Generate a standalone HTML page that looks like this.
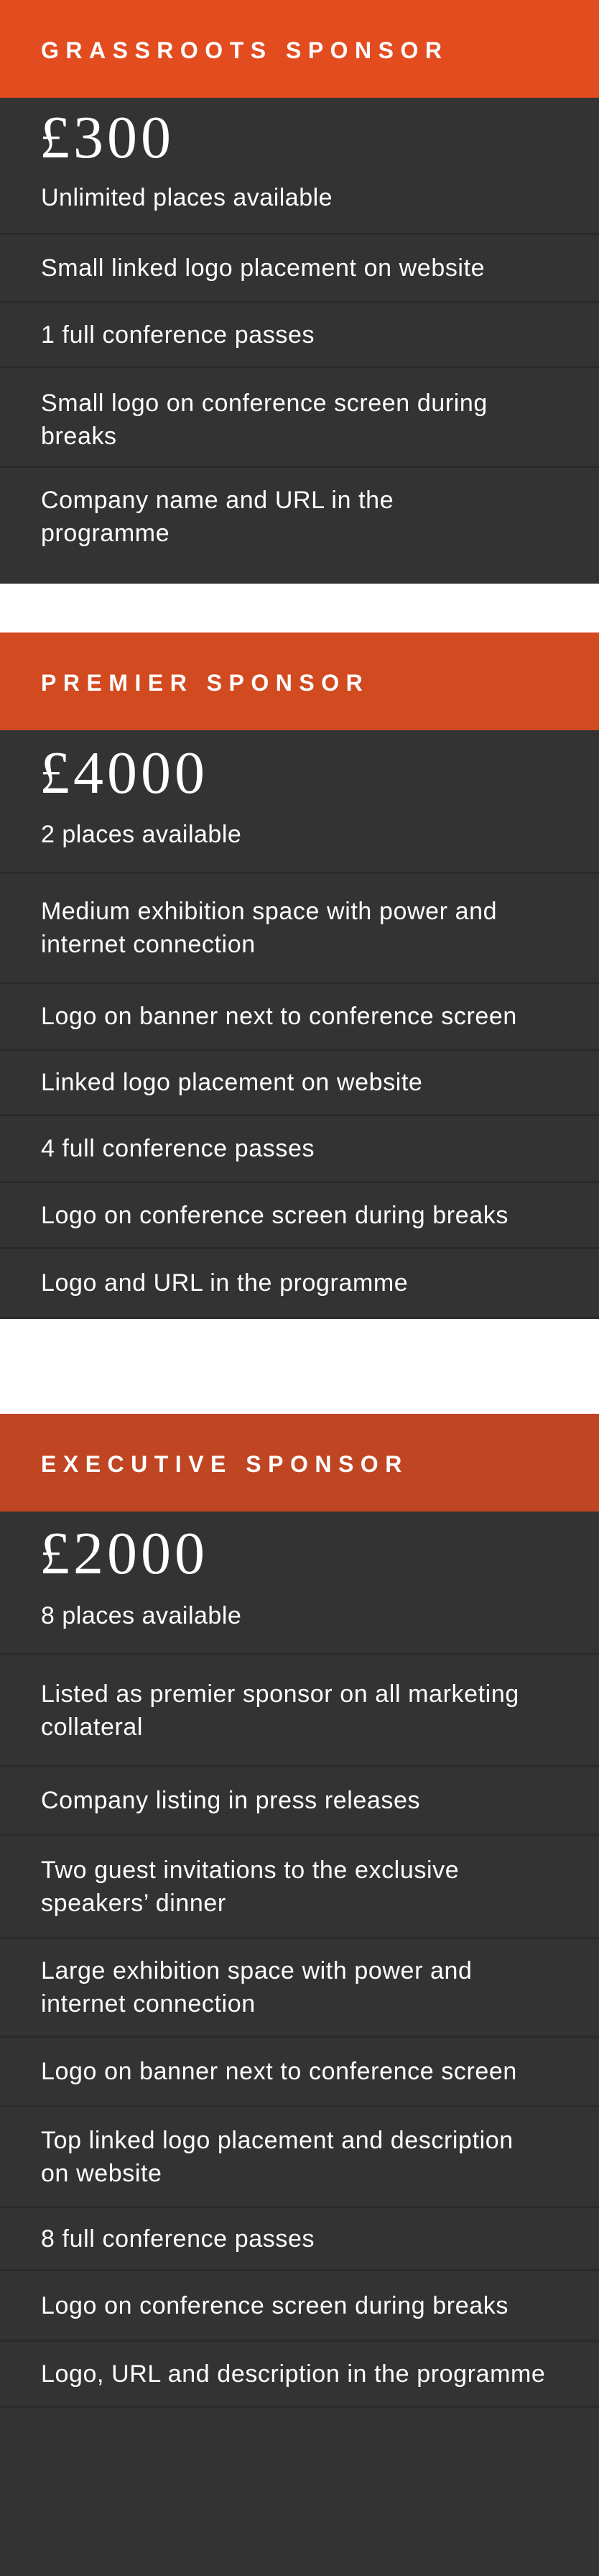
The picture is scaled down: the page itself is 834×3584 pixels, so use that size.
<!DOCTYPE html>
<html><head><meta charset="utf-8"><style>
*{margin:0;padding:0;box-sizing:border-box}
body{width:834px;height:3584px;background:#fff;font-family:"Liberation Sans",sans-serif;color:#fff;position:relative;overflow:hidden}
.sec{position:absolute;left:0;width:834px;background:#333}
.hd{height:136px;display:flex;align-items:center;padding-left:57px;font-weight:bold;font-size:32px;letter-spacing:9.5px;padding-top:4px;white-space:nowrap}
.pr{position:relative}
.price{position:absolute;left:55px;font-family:"Liberation Serif",serif;font-size:84px;line-height:84px;letter-spacing:5px}
.sub{position:absolute;left:57px;font-size:34px;line-height:40px;letter-spacing:0.5px}
.row{display:flex;align-items:center;padding-left:57px;font-size:34px;line-height:46px;border-top:3px solid #2a2a2a;letter-spacing:0.6px;white-space:nowrap}
</style></head><body>

<div class="sec" style="top:0;height:812px">
<div class="hd" style="background:#e34c1f">GRASSROOTS SPONSOR</div>
<div class="pr" style="height:188px"><div class="price" style="top:14px">£300</div><div class="sub" style="top:119px">Unlimited places available</div></div>
<div class="row" style="height:95px">Small linked logo placement on website</div>
<div class="row" style="height:90px">1 full conference passes</div>
<div class="row" style="height:139px;padding-top:8px">Small logo on conference screen during<br>breaks</div>
<div class="row" style="height:165px;align-items:flex-start;padding-top:22px">Company name and URL in the<br>programme</div>
</div>

<div class="sec" style="top:880px;height:955px">
<div class="hd" style="background:#d24a20">PREMIER SPONSOR</div>
<div class="pr" style="height:197px"><div class="price" style="top:18px">£4000</div><div class="sub" style="top:125px">2 places available</div></div>
<div class="row" style="height:153px">Medium exhibition space with power and<br>internet connection</div>
<div class="row" style="height:93px">Logo on banner next to conference screen</div>
<div class="row" style="height:91px">Linked logo placement on website</div>
<div class="row" style="height:93px">4 full conference passes</div>
<div class="row" style="height:92px">Logo on conference screen during breaks</div>
<div class="row" style="height:100px;border-bottom:3px solid #2a2a2a">Logo and URL in the programme</div>
</div>

<div class="sec" style="top:1967px;height:1617px">
<div class="hd" style="background:#c04522">EXECUTIVE SPONSOR</div>
<div class="pr" style="height:197px"><div class="price" style="top:17px">£2000</div><div class="sub" style="top:125px">8 places available</div></div>
<div class="row" style="height:156px">Listed as premier sponsor on all marketing<br>collateral</div>
<div class="row" style="height:95px">Company listing in press releases</div>
<div class="row" style="height:144px">Two guest invitations to the exclusive<br>speakers’ dinner</div>
<div class="row" style="height:137px">Large exhibition space with power and<br>internet connection</div>
<div class="row" style="height:97px">Logo on banner next to conference screen</div>
<div class="row" style="height:140px">Top linked logo placement and description<br>on website</div>
<div class="row" style="height:88px">8 full conference passes</div>
<div class="row" style="height:98px">Logo on conference screen during breaks</div>
<div class="row" style="height:95px;border-bottom:3px solid #2a2a2a">Logo, URL and description in the programme</div>
</div>

</body></html>
